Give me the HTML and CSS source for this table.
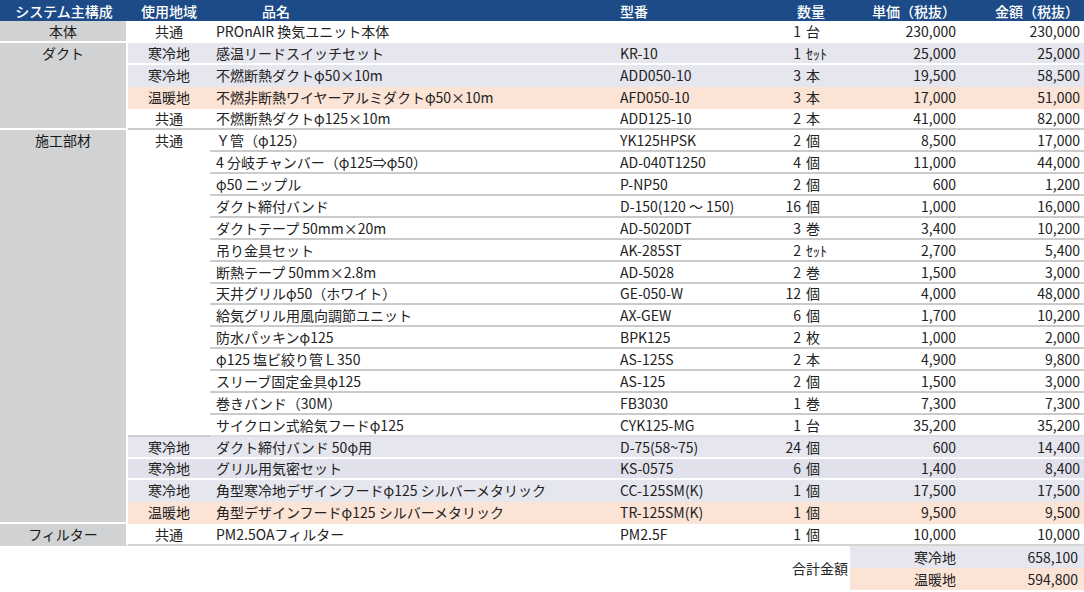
FILE: index.html
```html
<!DOCTYPE html>
<html lang="ja">
<head>
<meta charset="utf-8">
<title>システム主構成</title>
<link rel="stylesheet" href="styles.css">
</head>
<body>
<div class="sheet">
  <div class="grid">
    <div class="row head">
      <div class="c h1">システム主構成</div>
      <div class="c h2">使用地域</div>
      <div class="c h3">品名</div>
      <div class="c h4">型番</div>
      <div class="c h5">数量</div>
      <div class="c h6">単価（税抜）</div>
      <div class="c h7">金額（税抜）</div>
    </div>

    <div class="row wh gend">
      <div class="c sys"><span>本体</span></div>
      <div class="c area">共通</div>
      <div class="c name">PROnAIR 換気ユニット本体</div>
      <div class="c model"></div>
      <div class="c qty"><span class="n">1</span><span class="u">台</span></div>
      <div class="c price">230,000</div>
      <div class="c amt">230,000</div>
    </div>

    <div class="row lav sepw">
      <div class="c sys s4"><span>ダクト</span></div>
      <div class="c area">寒冷地</div>
      <div class="c name">感温リードスイッチセット</div>
      <div class="c model">KR-10</div>
      <div class="c qty"><span class="n">1</span><span class="u sm">ｾｯﾄ</span></div>
      <div class="c price">25,000</div>
      <div class="c amt">25,000</div>
    </div>
    <div class="row lav">
      <div class="c area">寒冷地</div>
      <div class="c name">不燃断熱ダクトφ50×10m</div>
      <div class="c model">ADD050-10</div>
      <div class="c qty"><span class="n">3</span><span class="u">本</span></div>
      <div class="c price">19,500</div>
      <div class="c amt">58,500</div>
    </div>
    <div class="row pch">
      <div class="c area">温暖地</div>
      <div class="c name">不燃非断熱ワイヤーアルミダクトφ50×10m</div>
      <div class="c model">AFD050-10</div>
      <div class="c qty"><span class="n">3</span><span class="u">本</span></div>
      <div class="c price">17,000</div>
      <div class="c amt">51,000</div>
    </div>
    <div class="row wh sepg">
      <div class="c area">共通</div>
      <div class="c name">不燃断熱ダクトφ125×10m</div>
      <div class="c model">ADD125-10</div>
      <div class="c qty"><span class="n">2</span><span class="u">本</span></div>
      <div class="c price">41,000</div>
      <div class="c amt">82,000</div>
    </div>

    <div class="row wh sepg">
      <div class="c sys s18"><span>施工部材</span></div>
      <div class="c area s14 sepl"><span>共通</span></div>
      <div class="c name">Ｙ管（φ125）</div>
      <div class="c model">YK125HPSK</div>
      <div class="c qty"><span class="n">2</span><span class="u">個</span></div>
      <div class="c price">8,500</div>
      <div class="c amt">17,000</div>
    </div>
    <div class="row wh sepg">
      <div class="c name">4 分岐チャンバー（φ125⇒φ50）</div>
      <div class="c model">AD-040T1250</div>
      <div class="c qty"><span class="n">4</span><span class="u">個</span></div>
      <div class="c price">11,000</div>
      <div class="c amt">44,000</div>
    </div>
    <div class="row wh sepg">
      <div class="c name">φ50 ニップル</div>
      <div class="c model">P-NP50</div>
      <div class="c qty"><span class="n">2</span><span class="u">個</span></div>
      <div class="c price">600</div>
      <div class="c amt">1,200</div>
    </div>
    <div class="row wh sepg">
      <div class="c name">ダクト締付バンド</div>
      <div class="c model">D-150(120 ～ 150)</div>
      <div class="c qty"><span class="n">16</span><span class="u">個</span></div>
      <div class="c price">1,000</div>
      <div class="c amt">16,000</div>
    </div>
    <div class="row wh sepg">
      <div class="c name">ダクトテープ 50mm×20m</div>
      <div class="c model">AD-5020DT</div>
      <div class="c qty"><span class="n">3</span><span class="u">巻</span></div>
      <div class="c price">3,400</div>
      <div class="c amt">10,200</div>
    </div>
    <div class="row wh sepg">
      <div class="c name">吊り金具セット</div>
      <div class="c model">AK-285ST</div>
      <div class="c qty"><span class="n">2</span><span class="u sm">ｾｯﾄ</span></div>
      <div class="c price">2,700</div>
      <div class="c amt">5,400</div>
    </div>
    <div class="row wh sepg">
      <div class="c name">断熱テープ 50mm×2.8m</div>
      <div class="c model">AD-5028</div>
      <div class="c qty"><span class="n">2</span><span class="u">巻</span></div>
      <div class="c price">1,500</div>
      <div class="c amt">3,000</div>
    </div>
    <div class="row wh sepg">
      <div class="c name">天井グリルφ50（ホワイト）</div>
      <div class="c model">GE-050-W</div>
      <div class="c qty"><span class="n">12</span><span class="u">個</span></div>
      <div class="c price">4,000</div>
      <div class="c amt">48,000</div>
    </div>
    <div class="row wh sepg">
      <div class="c name">給気グリル用風向調節ユニット</div>
      <div class="c model">AX-GEW</div>
      <div class="c qty"><span class="n">6</span><span class="u">個</span></div>
      <div class="c price">1,700</div>
      <div class="c amt">10,200</div>
    </div>
    <div class="row wh sepg">
      <div class="c name">防水パッキンφ125</div>
      <div class="c model">BPK125</div>
      <div class="c qty"><span class="n">2</span><span class="u">枚</span></div>
      <div class="c price">1,000</div>
      <div class="c amt">2,000</div>
    </div>
    <div class="row wh sepg">
      <div class="c name">φ125 塩ビ絞り管Ｌ350</div>
      <div class="c model">AS-125S</div>
      <div class="c qty"><span class="n">2</span><span class="u">本</span></div>
      <div class="c price">4,900</div>
      <div class="c amt">9,800</div>
    </div>
    <div class="row wh sepg">
      <div class="c name">スリーブ固定金具φ125</div>
      <div class="c model">AS-125</div>
      <div class="c qty"><span class="n">2</span><span class="u">個</span></div>
      <div class="c price">1,500</div>
      <div class="c amt">3,000</div>
    </div>
    <div class="row wh sepg">
      <div class="c name">巻きバンド（30M）</div>
      <div class="c model">FB3030</div>
      <div class="c qty"><span class="n">1</span><span class="u">巻</span></div>
      <div class="c price">7,300</div>
      <div class="c amt">7,300</div>
    </div>
    <div class="row wh sepl">
      <div class="c name">サイクロン式給気フードφ125</div>
      <div class="c model">CYK125-MG</div>
      <div class="c qty"><span class="n">1</span><span class="u">台</span></div>
      <div class="c price">35,200</div>
      <div class="c amt">35,200</div>
    </div>
    <div class="row lav sepw">
      <div class="c area">寒冷地</div>
      <div class="c name">ダクト締付バンド 50φ用</div>
      <div class="c model">D-75(58~75)</div>
      <div class="c qty"><span class="n">24</span><span class="u">個</span></div>
      <div class="c price">600</div>
      <div class="c amt">14,400</div>
    </div>
    <div class="row lav2 sepw">
      <div class="c area">寒冷地</div>
      <div class="c name">グリル用気密セット</div>
      <div class="c model">KS-0575</div>
      <div class="c qty"><span class="n">6</span><span class="u">個</span></div>
      <div class="c price">1,400</div>
      <div class="c amt">8,400</div>
    </div>
    <div class="row lav">
      <div class="c area">寒冷地</div>
      <div class="c name">角型寒冷地デザインフードφ125 シルバーメタリック</div>
      <div class="c model">CC-125SM(K)</div>
      <div class="c qty"><span class="n">1</span><span class="u">個</span></div>
      <div class="c price">17,500</div>
      <div class="c amt">17,500</div>
    </div>
    <div class="row pch">
      <div class="c area">温暖地</div>
      <div class="c name">角型デザインフードφ125 シルバーメタリック</div>
      <div class="c model">TR-125SM(K)</div>
      <div class="c qty"><span class="n">1</span><span class="u">個</span></div>
      <div class="c price">9,500</div>
      <div class="c amt">9,500</div>
    </div>

    <div class="row wh last">
      <div class="c sys"><span>フィルター</span></div>
      <div class="c area">共通</div>
      <div class="c name">PM2.5OAフィルター</div>
      <div class="c model">PM2.5F</div>
      <div class="c qty"><span class="n">1</span><span class="u">個</span></div>
      <div class="c price">10,000</div>
      <div class="c amt">10,000</div>
    </div>
  </div>

  <div class="totals">
    <div class="t-label">合計金額</div>
    <div class="t-row lav"><span class="t-area">寒冷地</span><span class="t-val">658,100</span></div>
    <div class="t-row pch"><span class="t-area">温暖地</span><span class="t-val">594,800</span></div>
  </div>
</div>
</body>
</html>
```

FILE: styles.css
```css
* { box-sizing: border-box; }

html, body {
  margin: 0;
  padding: 0;
  background: #ffffff;
}

body {
  font-family: "Noto Sans CJK JP", "Noto Sans", sans-serif;
  font-size: 14px;
  color: #222222;
}

.sheet {
  width: 1084px;
}

.grid {
  display: grid;
  grid-template-columns: 128px 82px 402px 164px 74px 110px 124px;
  grid-template-rows: 21px;
  grid-auto-rows: 21.875px;
}

.row { display: contents; }

.c {
  display: flex;
  align-items: center;
  white-space: nowrap;
  line-height: 1;
  border-bottom: 2px solid transparent;
  min-width: 0;
  overflow: visible;
}

/* header */
.head .c {
  background: #1d4b88;
  color: #ffffff;
  border-bottom: 0;
  font-weight: 500;
}
.h1 { justify-content: center; }
.h2 { justify-content: center; }
.h3 { padding-left: 52px; }
.h4 { padding-left: 8px; }
.h5 { padding-left: 21px; }
.h6 { justify-content: flex-end; padding-right: 4px; }
.h7 { justify-content: flex-end; padding-right: 5px; }

/* column cells */
.sys {
  background: #d1d2d4;
  border-right: 2px solid #ffffff;
  border-bottom: 2px solid #ffffff !important;
  justify-content: center;
  align-items: flex-start;
  color: #1a1a1a;
}
.sys span { line-height: 20px; }
.s4 { grid-row: span 4; }
.s18 { grid-row: span 18; }
.s14 { grid-row: span 14; }

.area { justify-content: center; }
.area.s14 { align-items: flex-start; }
.area.s14 span { line-height: 20px; }

.name { padding-left: 6px; }
.model { padding-left: 8px; }
.qty { padding-left: 0; }
.qty .n { display: inline-block; width: 25px; text-align: right; }
.qty .u { margin-left: 5px; }
.qty .u.sm { font-size: 14px; }
.price { justify-content: flex-end; padding-right: 4px; }
.amt { justify-content: flex-end; padding-right: 4px; }

/* row colours */
.lav .c:not(.sys) { background: #e6e6ef; border-bottom-color: #e6e6ef; }
.lav2 .c:not(.sys) { background: #e1e1eb; border-bottom-color: #e1e1eb; }
.pch .c:not(.sys) { background: #fbe3d6; border-bottom-color: #fbe3d6; }

/* separators */
.sepw .c:not(.sys) { border-bottom-color: #ffffff; }
.sepg .c:not(.sys) { border-bottom-color: #cbcbcb; }
.sepl .c:not(.sys), .c.sepl { border-bottom-color: #dedede; }
.area.s14 { border-bottom-color: #d6d6d6; }
.last .c { border-bottom-color: #d4d4d4 !important; }

/* totals */
.totals {
  display: grid;
  grid-template-columns: 776px 74px 234px;
  grid-template-rows: 22px 22px;
}
.t-label {
  grid-column: 2;
  grid-row: 1 / span 2;
  display: flex;
  align-items: center;
  justify-content: flex-end;
  padding-right: 2px;
  white-space: nowrap;
}
.t-row {
  grid-column: 3;
  display: grid;
  grid-template-columns: 110px 124px;
  align-items: center;
}
.t-row.lav { background: #e6e6ef; }
.t-row.pch { background: #fbe3d6; }
.t-area { text-align: right; padding-right: 4px; }
.t-val { text-align: right; padding-right: 6px; }
```
